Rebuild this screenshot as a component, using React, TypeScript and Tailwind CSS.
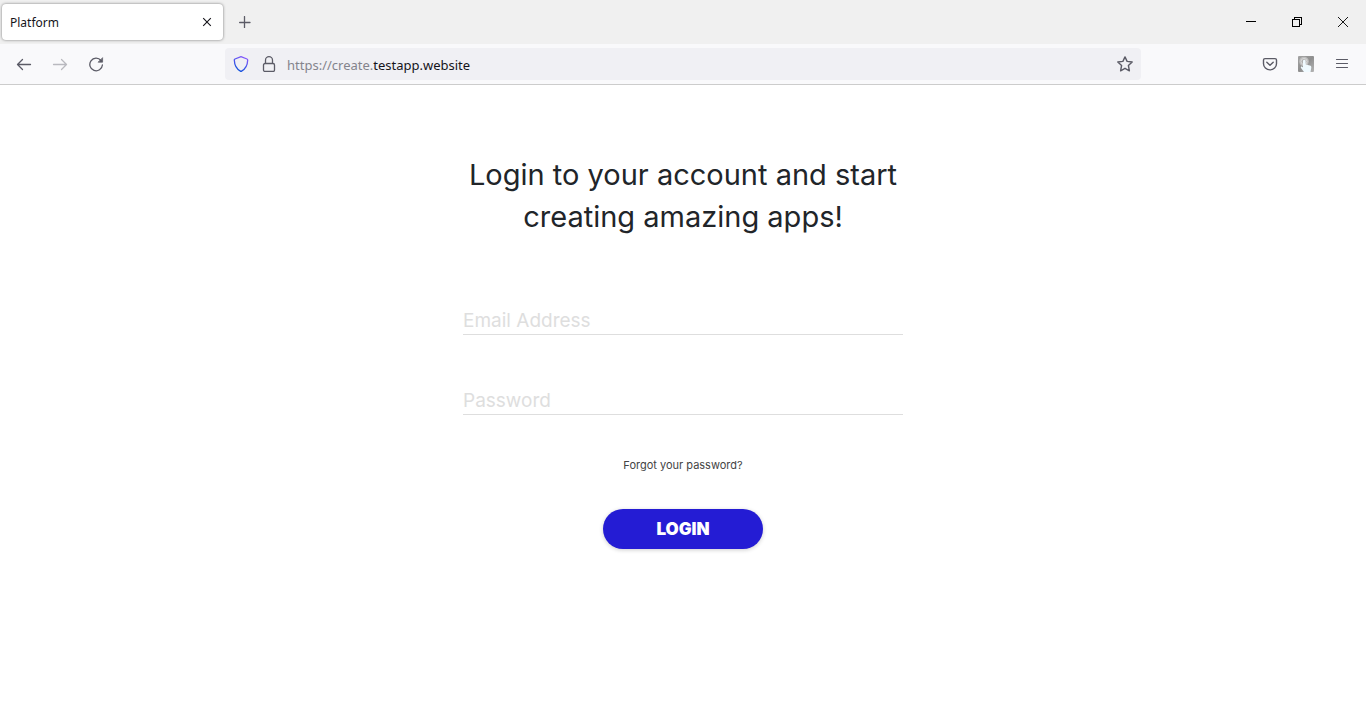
import React, { useState } from 'react';

interface IconProps {
  className?: string;
}

const TabCloseIcon = () => (
  <svg width="10" height="10" viewBox="0 0 10 10" fill="none" stroke="#15141a" strokeWidth="1.1">
    <path d="M1.2 1.2l7.6 7.6M8.8 1.2L1.2 8.8" />
  </svg>
);

const PlusIcon = () => (
  <svg width="12" height="12" viewBox="0 0 12 12" fill="none" stroke="#5b5b66" strokeWidth="1.3" strokeLinecap="round">
    <path d="M5.5.6v11M.6 6.500h10.400" />
  </svg>
);

const ArrowIcon = ({ className }: IconProps) => (
  <svg className={className} width="16" height="16" viewBox="0 0 16 16" fill="none" stroke="#5b5b66" strokeWidth="1.3" strokeLinecap="round" strokeLinejoin="round">
    <path d="M14.5 8.5h-13M6.5 3.5l-5 5 5 5" />
  </svg>
);

const ReloadIcon = () => (
  <svg width="16" height="16" viewBox="0 0 16 16" fill="none" stroke="#5b5b66" strokeWidth="1.3" strokeLinecap="round">
    <path d="M13 4.500A6.300 6.300 0 1 0 14.400 9" />
    <path d="M14.600 2v4.200h-4.200z" fill="#5b5b66" strokeWidth=".7" strokeLinejoin="round" />
  </svg>
);

const ShieldIcon = () => (
  <svg width="16" height="16" viewBox="0 0 16 16" fill="none">
    <defs>
      <linearGradient id="shield" x1="12" y1="0" x2="4" y2="16" gradientUnits="userSpaceOnUse">
        <stop offset="0" stopColor="#9059ff" />
        <stop offset="1" stopColor="#0250d8" />
      </linearGradient>
    </defs>
    <path
      d="M8 .7L14 3c.5.2.7.5.7 1C14.500 9 12.500 13 8.600 15.100a1.200 1.200 0 0 1-1.200 0C3.500 13 1.500 9 1.300 4c0-.5.2-.8.7-1z"
      stroke="url(#shield)"
      strokeWidth="1.3"
      strokeLinejoin="round"
    />
  </svg>
);

const LockIcon = () => (
  <svg width="16" height="16" viewBox="0 0 16 16" fill="none" stroke="#5b5b66" strokeWidth="1.3">
    <rect x="2.5" y="7.5" width="11" height="8" rx="1.5" />
    <path d="M4.500 7.500V4.200a3.500 3.500 0 0 1 7 0v3.300" />
  </svg>
);

const StarIcon = () => (
  <svg width="16" height="16" viewBox="0 0 16 16" fill="none" stroke="#5b5b66" strokeWidth="1.4" strokeLinejoin="round">
    <path d="M8 .9l2.100 4.500 5.100.6-3.800 3.500 1 5.300L8 12.300l-4.400 2.500 1-5.300L.8 6l5.100-.6z" />
  </svg>
);

const PocketIcon = () => (
  <svg width="16" height="16" viewBox="0 0 16 16" fill="none" stroke="#5b5b66" strokeWidth="1.4" strokeLinecap="round" strokeLinejoin="round">
    <path d="M3 2.600h10c.9 0 1.500.6 1.500 1.500v3.700a6.500 6.100 0 0 1-13 0V4.100c0-.9.6-1.500 1.500-1.500z" />
    <path d="M4.800 6.200L8 9.300l3.200-3.100" />
  </svg>
);

const TouchIcon = () => (
  <svg width="16" height="16" viewBox="0 0 16 16">
    <defs>
      <linearGradient id="touch" x1="0" y1="0" x2="1" y2="1">
        <stop offset="0" stopColor="#a4a4a4" />
        <stop offset=".5" stopColor="#8f8f8f" />
        <stop offset="1" stopColor="#b5b5b5" />
      </linearGradient>
    </defs>
    <rect width="16" height="16" rx="1" fill="url(#touch)" />
    <circle cx="6" cy="5.5" r="4.8" fill="#bebebe" />
    <circle cx="6" cy="5.5" r="3" fill="#b0b0b0" stroke="#dadada" />
    <path d="M5 5a1.300 1.300 0 0 1 2.600 0v3.600l4.200 1c1.200.4 1.700 1.100 1.500 2.200L12.500 16H6l-3-4c-.6-1 .4-1.900 1.300-1.200l.7.6z" fill="#f0faff" />
  </svg>
);

const MenuIcon = () => (
  <svg width="16" height="16" viewBox="0 0 16 16" fill="none" stroke="#5b5b66" strokeLinecap="round" strokeWidth="1.2">
    <path d="M2.500 3.500h11M2.500 7.500h11M2.500 11.500h11" />
  </svg>
);

const MinimizeIcon = () => (
  <svg width="10" height="10" viewBox="0 0 10 10" fill="none" stroke="#000" shapeRendering="crispEdges">
    <path d="M0 4.500h10" />
  </svg>
);

const RestoreIcon = () => (
  <svg width="10" height="10" viewBox="0 0 10 10" fill="none" stroke="#000" shapeRendering="crispEdges">
    <path d="M.5 2.500h7v7h-7zM2.500 2.500v-2h7v7h-2" />
  </svg>
);

const WindowCloseIcon = () => (
  <svg width="10" height="10" viewBox="0 0 10 10" fill="none" stroke="#000" strokeWidth=".9">
    <path d="M0 0l10 10M10 0L0 10" />
  </svg>
);

const TabStrip = () => (
  <div className="flex h-11 items-center justify-between bg-[#f0f0f0]">
    <div className="flex items-center pl-0.5">
      <div className="flex h-9 w-[221px] items-center justify-between rounded bg-white pr-[11px] pl-2 shadow-[0_0_3px_rgba(0,0,0,0.5)]">
        <span className="pt-0.5 text-xs text-[#15141a]">Platform</span>
        <button type="button" aria-label="Close tab">
          <TabCloseIcon />
        </button>
      </div>
      <button type="button" aria-label="New tab" className="flex h-8 w-11 items-center justify-center">
        <PlusIcon />
      </button>
    </div>
    <div className="flex h-11">
      <button type="button" aria-label="Minimize" className="flex w-[46px] items-center justify-center">
        <MinimizeIcon />
      </button>
      <button type="button" aria-label="Restore" className="flex w-[46px] items-center justify-center">
        <RestoreIcon />
      </button>
      <button type="button" aria-label="Close window" className="flex w-[46px] items-center justify-center">
        <WindowCloseIcon />
      </button>
    </div>
  </div>
);

const NavBar = () => (
  <div className="flex h-[41px] items-center border-b border-[#cccccc] bg-[#f9f9fb] px-4">
    <div className="flex flex-1 items-center gap-5">
      <button type="button" aria-label="Back">
        <ArrowIcon />
      </button>
      <button type="button" aria-label="Forward" disabled>
        <ArrowIcon className="rotate-y-180 opacity-40" />
      </button>
      <button type="button" aria-label="Reload">
        <ReloadIcon />
      </button>
    </div>
    <div className="flex h-8 w-[69%] max-w-[916px] items-center rounded bg-[#f0f0f4] px-2">
      <ShieldIcon />
      <span className="ml-3">
        <LockIcon />
      </span>
      <span className="ml-2.5 flex-1 pt-0.5 text-[13px] leading-5 text-[#15141a]">
        <span className="text-[#84848c]">https://create.</span>testapp.website
      </span>
      <button type="button" aria-label="Bookmark this page">
        <StarIcon />
      </button>
    </div>
    <div className="flex flex-1 items-center justify-end gap-5">
      <button type="button" aria-label="Save to Pocket">
        <PocketIcon />
      </button>
      <button type="button" aria-label="Touch extension">
        <TouchIcon />
      </button>
      <button type="button" aria-label="Open menu">
        <MenuIcon />
      </button>
    </div>
  </div>
);

const LoginForm = () => {
  const [formData, setFormData] = useState({ email: '', password: '' });

  const handleChange = (e: React.ChangeEvent<HTMLInputElement>) => {
    const { name, value } = e.target;
    setFormData(prev => ({ ...prev, [name]: value }));
  };

  const handleSubmit = (e: React.FormEvent<HTMLFormElement>) => {
    e.preventDefault();
  };

  const inputClass = 'block h-8 w-full border-b border-[#dedede] pt-1 text-[19px] text-[#212529] outline-none placeholder:text-[#dedede]';

  return (
    <form onSubmit={handleSubmit} className="mx-auto flex w-full max-w-[440px] flex-col items-center">
      <h1 className="text-center text-[29px] leading-[42px] text-[#212529]">
        Login to your account and start creating amazing apps!
      </h1>
      <input className={`${inputClass} mt-[65px]`} type="email" name="email" aria-label="Email Address" placeholder="Email Address" value={formData.email} onChange={handleChange} />
      <input className={`${inputClass} mt-12`} type="password" name="password" aria-label="Password" placeholder="Password" value={formData.password} onChange={handleChange} />
      <a href="#forgot" className="mt-10 text-[11px] leading-5 text-[#444444]">
        Forgot your password?
      </a>
      <button type="submit" className="mt-[34px] h-10 w-40 rounded-full bg-[#241cd4] pt-0.5 text-[17px] font-black text-white shadow-[0_1px_4px_rgba(0,0,0,0.2)]">
        LOGIN
      </button>
    </form>
  );
};

export default function App() {
  return (
    <div className="min-h-screen bg-white">
      <header className="font-['Noto_Sans',sans-serif]">
        <TabStrip />
        <NavBar />
      </header>
      <main className="px-4 pt-[69px] font-['Inter',sans-serif]">
        <LoginForm />
      </main>
    </div>
  );
}
